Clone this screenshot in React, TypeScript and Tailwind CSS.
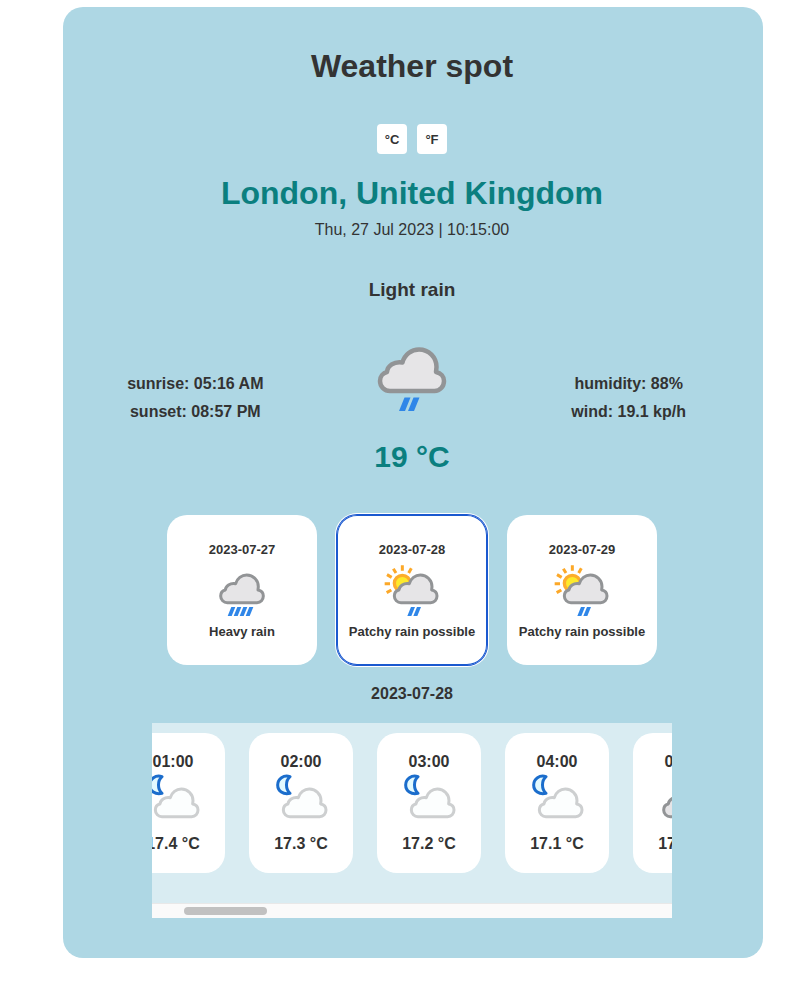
import { useLayoutEffect, useRef, useState } from "react";

type Kind = "light" | "heavy" | "patchy" | "night" | "overcast";

const CLOUD =
  "M52 128A20 20 0 0 1 32 108C32 99 38 92 46 90C47 78 60 68 77 71C81 55 95 45 110 45C130 45 145 61 145 80L144 90C154 92 160 99 160 108C160 119 152 128 141 128Z";

const DROPS: Record<Kind, number[]> = {
  light: [71, 89],
  heavy: [54, 72, 90, 108],
  patchy: [83, 101],
  night: [],
  overcast: [],
};

const CONDITION: Record<Kind, string> = {
  light: "Light rain",
  heavy: "Heavy rain",
  patchy: "Patchy rain possible",
  night: "Partly cloudy night",
  overcast: "Overcast",
};

function WeatherIcon({ kind, className }: { kind: Kind; className: string }) {
  const shifted = kind === "patchy" || kind === "night";
  const pale = kind === "night";
  return (
    <svg viewBox="0 0 192 192" role="img" aria-label={CONDITION[kind]} className={className}>
      {kind === "patchy" && (
        <g>
          <circle cx="67" cy="70" r="24" fill="#fdea2c" stroke="#fdae2c" strokeWidth="10" />
          <path
            d="M67 16V32M94 25L86 39M40 26L48 39M21 44L35 52M14 71H30M20 98L34 90"
            stroke="#fca828"
            strokeWidth="9"
            fill="none"
          />
        </g>
      )}
      {kind === "night" && (
        <path
          d="M63 8C44 2 26 14 26 33C26 51 43 63 63 58C49 46 49 20 63 8Z"
          fill="#e3faff"
          stroke="#1b6dcc"
          strokeWidth="9"
          strokeLinejoin="round"
        />
      )}
      <path
        d={CLOUD}
        transform={shifted ? "translate(11 0)" : undefined}
        fill={pale ? "#fcfefe" : "#e6e5e7"}
        stroke={pale ? "#cdcfd0" : "#929496"}
        strokeWidth="9"
        strokeLinejoin="round"
      />
      {DROPS[kind].map((x) => (
        <path key={x} d="M-1 168L10 141H22L11 168Z" transform={`translate(${x} 0)`} fill="#2f86e8" />
      ))}
    </svg>
  );
}

const DAYS: { date: string; kind: Kind }[] = [
  { date: "2023-07-27", kind: "heavy" },
  { date: "2023-07-28", kind: "patchy" },
  { date: "2023-07-29", kind: "patchy" },
];

const TEMPS = [
  17.5, 17.4, 17.3, 17.2, 17.1, 17.0, 17.1, 17.5, 18.1, 18.9, 19.8, 20.4, 20.9, 21.3, 21.5, 21.4,
  21.1, 20.6, 20.0, 19.3, 18.7, 18.2, 17.9, 17.6,
];

function HourlyForecast() {
  const ref = useRef<HTMLUListElement>(null);
  const [progress, setProgress] = useState(0);

  const update = () => {
    const el = ref.current;
    if (el) setProgress(el.scrollLeft / Math.max(1, el.scrollWidth - el.clientWidth));
  };

  useLayoutEffect(() => {
    if (ref.current) ref.current.scrollLeft = 169;
    update();
  }, []);

  return (
    <section aria-label="Hourly forecast" className="mx-auto mt-[17px] w-full max-w-[520px] bg-[#d9ecf2]">
      <ul
        ref={ref}
        onScroll={update}
        className="flex gap-6 overflow-x-auto px-2.5 pt-2.5 pb-[30px] [scrollbar-width:none]"
      >
        {TEMPS.map((temp, hour) => (
          <li
            key={hour}
            className="flex h-[140px] w-[104px] shrink-0 flex-col items-center rounded-[20px] bg-white pt-[17px] text-base leading-6 font-bold"
          >
            <span>{String(hour).padStart(2, "0")}:00</span>
            <WeatherIcon kind={hour < 5 ? "night" : "overcast"} className="-mb-1.5 size-16" />
            <span>{temp.toFixed(1)} °C</span>
          </li>
        ))}
      </ul>
      <div className="border-t border-[#e8e8e8] bg-[#fafafa] px-0.5 pt-[3px] pb-[3px]">
        <div
          className="h-2 w-[16%] rounded-full bg-[#c1c1c1]"
          style={{ marginLeft: `${progress * 84 + 0.3}%` }}
        />
      </div>
    </section>
  );
}

export default function App() {
  const [fahrenheit, setFahrenheit] = useState(false);
  const [selected, setSelected] = useState("2023-07-28");
  const unitButton =
    "size-[30px] cursor-pointer rounded bg-white pt-0.5 text-[13px] font-bold text-[#333]";

  return (
    <div className="bg-white pt-[7px] pr-[37px] pb-10 pl-[63px] font-['Liberation_Sans',Arial,sans-serif] text-[#333]">
      <main className="rounded-[20px] bg-[#aed7e4] pt-[39px] pr-0.5 pb-10 text-center">
        <h1 className="text-[32px] leading-10 font-bold">Weather spot</h1>
        <div className="mt-[38px] flex justify-center gap-2.5">
          <button type="button" className={unitButton} onClick={() => setFahrenheit(false)}>
            °C
          </button>
          <button type="button" className={unitButton} onClick={() => setFahrenheit(true)}>
            °F
          </button>
        </div>
        <h2 className="mt-[19px] text-[32px] leading-10 font-bold text-[#0b7f7f]">
          London, United Kingdom
        </h2>
        <p className="mt-[5px] text-base leading-6">Thu, 27 Jul 2023 | 10:15:00</p>
        <h3 className="mt-[34px] text-[19px] leading-7 font-bold">Light rain</h3>
        <div className="mt-[23px] grid grid-cols-3 items-end px-6 text-base leading-7 font-bold">
          <div>
            <p>sunrise: 05:16 AM</p>
            <p>sunset: 08:57 PM</p>
          </div>
          <WeatherIcon kind="light" className="mx-auto mb-[3px] size-24" />
          <div>
            <p>humidity: 88%</p>
            <p>wind: 19.1 kp/h</p>
          </div>
        </div>
        <p className="mt-[11px] text-[30px] leading-10 font-bold text-[#0b7f7f]">
          {fahrenheit ? "66 °F" : "19 °C"}
        </p>
        <div className="mt-[38px] flex flex-wrap justify-center gap-5">
          {DAYS.map(({ date, kind }) => (
            <button
              key={date}
              type="button"
              aria-pressed={selected === date}
              onClick={() => setSelected(date)}
              className={
                "flex size-[150px] cursor-pointer flex-col items-center rounded-[20px] bg-white pt-[25px] text-[13px] leading-5 font-bold whitespace-nowrap " +
                (selected === date
                  ? "shadow-[inset_0_0_0_1px_#1b59cf,0_0_0_1px_#1b59cf,0_0_0_2px_#ffffff]"
                  : "")
              }
            >
              <span>{date}</span>
              <WeatherIcon kind={kind} className="-mb-0.5 size-16 shrink-0" />
              <span>{CONDITION[kind]}</span>
            </button>
          ))}
        </div>
        <p className="mt-[17px] text-base leading-6 font-bold">{selected}</p>
        <HourlyForecast />
      </main>
    </div>
  );
}
